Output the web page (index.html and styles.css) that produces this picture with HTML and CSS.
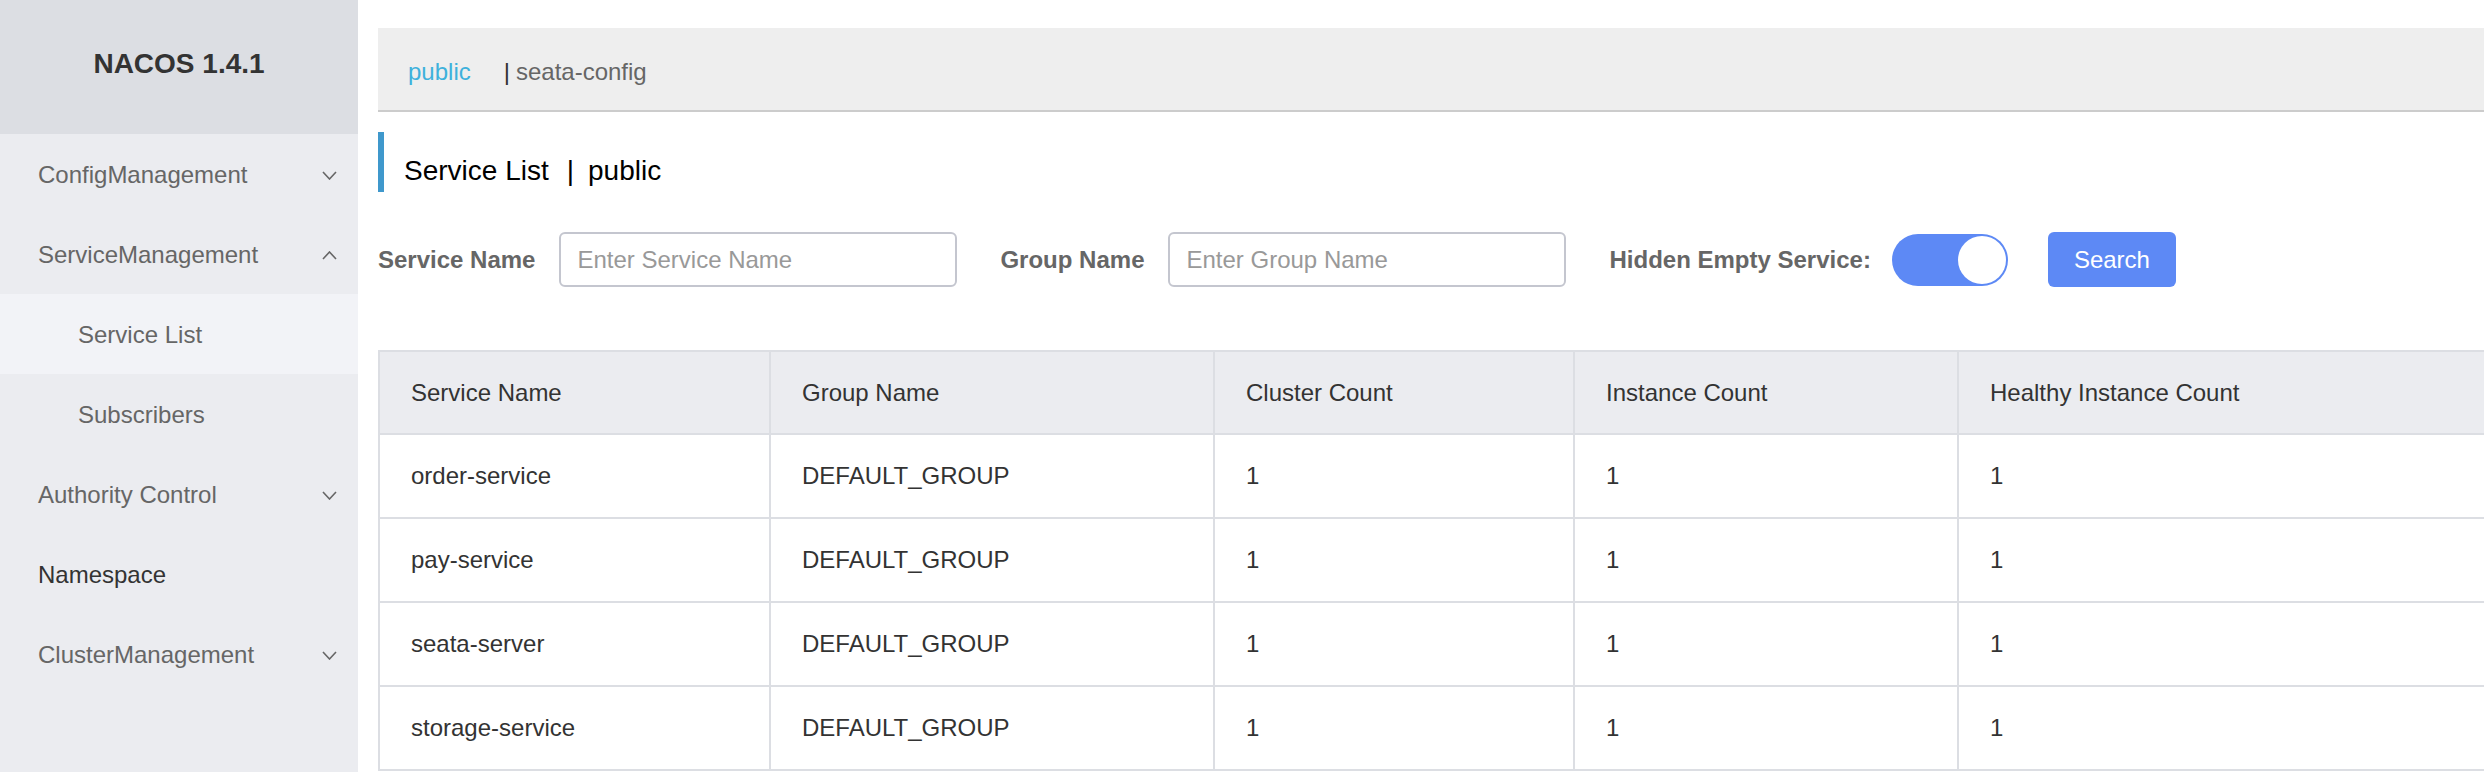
FILE: index.html
```html
<!DOCTYPE html>
<html lang="en">
<head>
<meta charset="utf-8">
<title>Nacos - Service List</title>
<link rel="stylesheet" href="styles.css">
</head>
<body>
<aside class="sidebar">
  <div class="brand">NACOS 1.4.1</div>
  <ul class="menu">
    <li class="menu-item"><span>ConfigManagement</span>
      <svg class="chev" width="15" height="9" viewBox="0 0 15 9"><polyline points="1,1 7.5,8 14,1"/></svg></li>
    <li class="menu-item"><span>ServiceManagement</span>
      <svg class="chev" width="15" height="9" viewBox="0 0 15 9"><polyline points="1,8 7.5,1 14,8"/></svg></li>
    <li class="menu-item sub active"><span>Service List</span></li>
    <li class="menu-item sub"><span>Subscribers</span></li>
    <li class="menu-item"><span>Authority Control</span>
      <svg class="chev" width="15" height="9" viewBox="0 0 15 9"><polyline points="1,1 7.5,8 14,1"/></svg></li>
    <li class="menu-item strong"><span>Namespace</span></li>
    <li class="menu-item"><span>ClusterManagement</span>
      <svg class="chev" width="15" height="9" viewBox="0 0 15 9"><polyline points="1,1 7.5,8 14,1"/></svg></li>
  </ul>
</aside>
<main class="main">
  <div class="ns-bar">
    <span class="ns-current">public</span>
    <span class="ns-sep">|</span>
    <span class="ns-link">seata-config</span>
  </div>
  <h1 class="page-title"><span>Service List</span><span class="title-sep">|</span><span>public</span></h1>
  <div class="search-form">
    <label class="form-label">Service Name</label>
    <input class="form-input" type="text" placeholder="Enter Service Name">
    <label class="form-label gap">Group Name</label>
    <input class="form-input" type="text" placeholder="Enter Group Name">
    <label class="form-label gap">Hidden Empty Service:</label>
    <span class="switch"><span class="knob"></span></span>
    <button class="btn-search" type="button">Search</button>
  </div>
  <table class="svc-table">
    <colgroup>
      <col class="c1"><col class="c2"><col class="c3"><col class="c4"><col class="c5">
    </colgroup>
    <thead>
      <tr><th>Service Name</th><th>Group Name</th><th>Cluster Count</th><th>Instance Count</th><th>Healthy Instance Count</th></tr>
    </thead>
    <tbody>
      <tr><td>order-service</td><td>DEFAULT_GROUP</td><td>1</td><td>1</td><td>1</td></tr>
      <tr><td>pay-service</td><td>DEFAULT_GROUP</td><td>1</td><td>1</td><td>1</td></tr>
      <tr><td>seata-server</td><td>DEFAULT_GROUP</td><td>1</td><td>1</td><td>1</td></tr>
      <tr><td>storage-service</td><td>DEFAULT_GROUP</td><td>1</td><td>1</td><td>1</td></tr>
    </tbody>
  </table>
</main>
</body>
</html>
```

FILE: styles.css
```css
* { box-sizing: border-box; }
html, body { margin: 0; padding: 0; }
body {
  display: flex;
  height: 772px;
  overflow: hidden;
  background: #fff;
  font-family: "Liberation Sans", Arial, Helvetica, sans-serif;
  color: #333;
}

/* Sidebar */
.sidebar {
  width: 358px;
  flex: none;
  background: #ebecf0;
  height: 100%;
}
.brand {
  height: 134px;
  background: #dcdee3;
  display: flex;
  align-items: center;
  justify-content: center;
  padding-bottom: 6px;
  font-size: 28px;
  font-weight: bold;
  color: #333;
}
.menu { list-style: none; margin: 0; padding: 0; }
.menu-item {
  height: 80px;
  display: flex;
  align-items: center;
  justify-content: space-between;
  padding: 2px 21px 0 38px;
  font-size: 24px;
  color: #666;
}
.menu-item.sub { padding-left: 78px; }
.menu-item.active { background: #f2f3f7; }
.menu-item.strong { color: #333; }
.chev polyline {
  fill: none;
  stroke: #666;
  stroke-width: 1.6;
}

/* Main */
.main {
  flex: 1;
  min-width: 0;
  overflow: hidden;
  padding: 28px 0 0 20px;
}
.ns-bar {
  height: 84px;
  background: #eeeeee;
  border-bottom: 2px solid #cccccc;
  display: flex;
  align-items: center;
  padding: 6px 0 0 30px;
}
.ns-current { font-size: 24px; color: #3eb1dc; margin-right: 33px; }
.ns-sep { font-size: 24px; color: #333; margin-right: 6px; }
.ns-link { font-size: 24px; color: #666; }

.page-title {
  margin: 20px 0 0;
  height: 60px;
  border-left: 6px solid #3f98cc;
  padding: 23px 0 0 20px;
  font-size: 28px;
  line-height: 32px;
  font-weight: normal;
  color: #000;
  display: flex;
}
.title-sep { margin: 0 14px 0 18px; }

.search-form {
  margin-top: 40px;
  height: 55px;
  display: flex;
  align-items: center;
}
.form-label {
  font-size: 24px;
  font-weight: bold;
  color: #666;
  margin-right: 24px;
}
.form-label.gap { margin-left: 43px; }
.form-input {
  width: 398px;
  height: 55px;
  border: 2px solid #c4c6cf;
  border-radius: 6px;
  padding: 0 16px;
  font-family: inherit;
  font-size: 24px;
  color: #333;
  outline: none;
  background: #fff;
}
.form-input::placeholder { color: #999; }
.switch {
  width: 116px;
  height: 52px;
  border-radius: 26px;
  background: #5d89f5;
  display: flex;
  align-items: center;
  justify-content: flex-end;
  padding-right: 2px;
  margin-left: -3px;
}
.knob {
  width: 48px;
  height: 48px;
  border-radius: 50%;
  background: #fff;
}
.btn-search {
  margin-left: 40px;
  width: 128px;
  height: 55px;
  border: none;
  border-radius: 6px;
  background: #5d89f5;
  color: #fff;
  font-family: inherit;
  font-size: 24px;
}

.svc-table {
  margin-top: 63px;
  width: 2200px;
  table-layout: fixed;
  border-collapse: separate;
  border-spacing: 0;
  border-top: 2px solid #dcdee3;
  border-left: 2px solid #dcdee3;
  font-size: 24px;
  color: #333;
}
.c1 { width: 391px; }
.c2 { width: 444px; }
.c3 { width: 360px; }
.c4 { width: 384px; }
.c5 { width: 619px; }
.svc-table th,
.svc-table td {
  border-right: 2px solid #dcdee3;
  border-bottom: 2px solid #dcdee3;
  padding: 0 30px 0 31px;
  text-align: left;
  font-weight: normal;
  vertical-align: middle;
  white-space: nowrap;
}
.svc-table thead tr { height: 83px; }
.svc-table th { background: #ebecf0; }
.svc-table tbody tr { height: 84px; }
```
